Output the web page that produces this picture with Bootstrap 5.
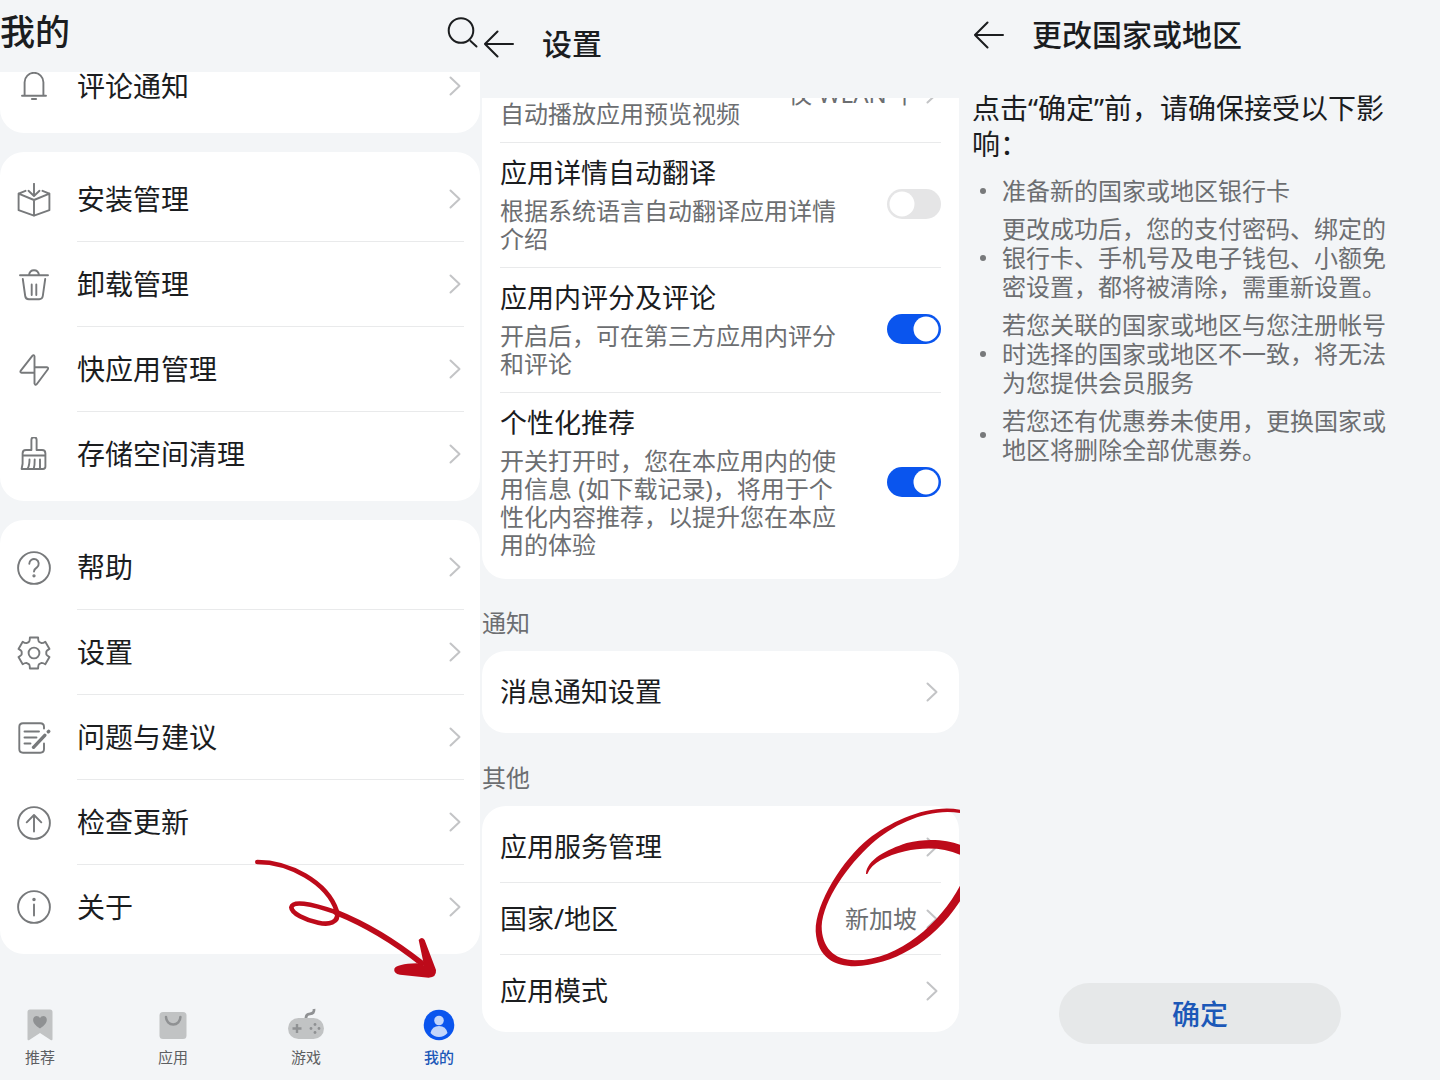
<!DOCTYPE html>
<html lang="zh-CN">
<head>
<meta charset="utf-8">
<meta name="viewport" content="width=device-width, initial-scale=1">
<title>应用市场设置</title>
<link href="https://cdn.jsdelivr.net/npm/bootstrap@5.3.0/dist/css/bootstrap.min.css" rel="stylesheet">
<style>
  :root { --ink: #1b1d1f; --soft: #6c6e71; --page: #f3f5f7; --rule: #e9eaeb; --blue: #0a55ee; --red: #bd0a1a; }
  body { background: var(--page); color: var(--ink); font-family: "Noto Sans", "Noto Sans CJK SC", sans-serif; font-size: 28px; line-height: 36px; }
  a { color: inherit; text-decoration: none; }
  svg { display: block; flex: none; }
  .line-icon { fill: none; stroke: #77797b; stroke-width: 1.9; stroke-linecap: round; stroke-linejoin: round; }
  .panel { min-height: 100vh; }
  .viewport { overflow: hidden; }
  .icon-btn { border: 0; background: none; padding: 0; color: var(--ink); }
  .icon-btn svg { fill: none; stroke: currentColor; stroke-width: 2; stroke-linecap: round; }
  .sheet { background: #fff; border-radius: 24px; padding: 5px 0; }
  .chev { width: 12px; height: 20px; fill: none; stroke: #c3c4c6; stroke-width: 2; stroke-linecap: round; stroke-linejoin: round; }
  .soft { color: var(--soft); font-size: 24px; line-height: 28px; }
  .bar-title { font-size: 30px; font-weight: 500; margin: 0; }

  /* first screen */
  .mine-head { height: 72px; padding: 0 2px 8px 0; }
  .mine-head h1 { font-size: 35px; font-weight: 500; margin: 0; }
  .mine-list { margin-top: -33px; gap: 19px; }
  .mine-row { height: 85px; padding: 0 16px 0 17px; gap: 26px; }
  .mine-row:last-child { height: 84px; }
  .mine-body { height: 100%; padding-right: 3px; border-bottom: 1px solid var(--rule); }
  .mine-row:last-child .mine-body { border-bottom: 0; }
  .tabs { padding: 0 19px 13px 18px; font-size: 15px; line-height: 20px; color: #5d5f62; }
  .tabs a { width: 44px; gap: 4px; }
  .tabs a.current { color: #1c58b8; font-weight: 500; }
  .scribble-arrow { position: absolute; right: 0; bottom: 0; pointer-events: none; }

  /* second screen */
  .prefs { padding-left: 2px; font-size: 27px; }
  .prefs .viewport { padding-right: 1px; }
  .prefs-head { height: 98px; padding: 0 2px 10px; gap: 28px; }
  .prefs-list { margin-top: -57px; }
  .prefs .sheet > * { margin: 0 18px; border-bottom: 1px solid var(--rule); }
  .prefs .sheet > :last-child { border-bottom: 0; }
  .pref-row { padding: 12px 0 14px; gap: 40px; }
  .pref-row:last-child { padding-bottom: 15px; }
  .pref-row .soft { margin-top: 6px; }
  .preview-row { min-height: 97px; gap: 9px; padding-right: 3px; }
  .preview-label { padding-bottom: 14px; }
  .link-row { min-height: 72px; padding-right: 3px; }
  .link-row .soft { margin-right: 9px; }
  .group-name { margin: 30px 0 14px; font-weight: 400; }
  .last-group { padding-top: 1px; }
  .form-switch .form-check-input { width: 54px; height: 30px; margin: 0; border: 0; background-color: #e5e5e6; background-size: 30px 30px;
    background-image: url("data:image/svg+xml,%3csvg xmlns='http://www.w3.org/2000/svg' viewBox='0 0 30 30'%3e%3ccircle cx='15' cy='15' r='12.5' fill='white'/%3e%3c/svg%3e"); }
  .form-switch .form-check-input:checked { background-color: var(--blue);
    background-image: url("data:image/svg+xml,%3csvg xmlns='http://www.w3.org/2000/svg' viewBox='0 0 30 30'%3e%3ccircle cx='15' cy='15' r='12.5' fill='white'/%3e%3c/svg%3e"); }
  .scribble-ring { position: absolute; right: -1px; top: -3px; pointer-events: none; }

  /* third screen */
  .region { padding: 0 44px 36px 12px; }
  .region-head { height: 70px; padding-left: 2px; gap: 28px; }
  .region-lead { margin: 20px 0 14px; }
  .effects { gap: 9px; margin: 0; padding-left: 8px; }
  .effects li { display: flex; align-items: center; gap: 16px; line-height: 29px; }
  .effects li::before { content: ""; flex: none; width: 6px; height: 6px; border-radius: 50%; background: #77797b; }
  .confirm { width: 282px; height: 61px; margin-left: 32px; font-size: 28px; font-weight: 500; border: 0; color: #1c58b8; background: #e6e8e9; }
</style>
<script src="https://cdn.jsdelivr.net/npm/bootstrap@5.3.0/dist/js/bootstrap.bundle.min.js"></script>
</head>
<body>
<main class="container-fluid p-0">
<div class="row g-0">

  <section class="col-4 panel d-flex flex-column position-relative">
    <header class="mine-head d-flex align-items-center justify-content-between">
      <h1>我的</h1>
      <button class="icon-btn" type="button" aria-label="搜索"><svg width="32" height="32" viewBox="0 0 32 32"><circle cx="15" cy="14.500" r="12.300"/><path d="M24.500 25l6 5.500"/></svg></button>
    </header>
    <div class="viewport flex-grow-1">
      <div class="mine-list d-flex flex-column">
        <nav class="sheet">
          <a href="#" class="mine-row d-flex align-items-center">
            <svg class="line-icon" width="34" height="34" viewBox="0 0 34 34"><path d="M5 26.700h24M7.600 26.500V13.200a9.400 9.400 0 0 1 18.800 0v13.300"/><path d="M15 30h4" stroke-width="2.200"/></svg>
            <span class="mine-body flex-grow-1 d-flex align-items-center justify-content-between">评论通知<svg class="chev" viewBox="0 0 12 20"><path d="M1.500 1.500L10.500 10l-9 8.500"/></svg></span></a>
        </nav>
        <nav class="sheet">
          <a href="#" class="mine-row d-flex align-items-center">
            <svg class="line-icon" width="34" height="34" viewBox="0 0 34 34"><path d="M8.500 7.800L1.600 10.600v16.600L17 32.700l15.400-5.500V10.600l-6.900-2.800M1.600 10.600L17 17l15.400-6.400M17 17v15.700M17 .8v12M11.500 7.800L17 13l5.500-5.200"/></svg>
            <span class="mine-body flex-grow-1 d-flex align-items-center justify-content-between">安装管理<svg class="chev" viewBox="0 0 12 20"><path d="M1.500 1.500L10.500 10l-9 8.500"/></svg></span></a>
          <a href="#" class="mine-row d-flex align-items-center">
            <svg class="line-icon" width="34" height="34" viewBox="0 0 34 34"><path d="M3 7.200h28M12 7C12.500 3.500 14.500 2.200 17 2.200S21.500 3.500 22 7M5.800 11l2.400 17q.4 3.200 3.600 3.200h10.400q3.200 0 3.600-3.200l2.400-17M14.700 16.500V27M19.300 16.500V27"/></svg>
            <span class="mine-body flex-grow-1 d-flex align-items-center justify-content-between">卸载管理<svg class="chev" viewBox="0 0 12 20"><path d="M1.500 1.500L10.500 10l-9 8.500"/></svg></span></a>
          <a href="#" class="mine-row d-flex align-items-center">
            <svg class="line-icon" width="34" height="34" viewBox="0 0 34 34"><path d="M17.500 30.500V3.200q-.7-2-2.200-.4L3.600 17.800q-.8 1.700 1 1.900h12.900M17.500 14.300h12.400q1.800.3 1 1.900L19.700 31.200q-1.500 1.600-2.200-.7"/></svg>
            <span class="mine-body flex-grow-1 d-flex align-items-center justify-content-between">快应用管理<svg class="chev" viewBox="0 0 12 20"><path d="M1.500 1.500L10.500 10l-9 8.500"/></svg></span></a>
          <a href="#" class="mine-row d-flex align-items-center">
            <svg class="line-icon" width="34" height="34" viewBox="0 0 34 34"><path d="M14.400 13V2.800a2.600 2.600 0 0 1 5.200 0V13h5.400q3.400 0 3.400 3.400v2.100H5.600v-2.100q0-3.400 3.400-3.400zM5.600 18.500v8.300l-1 5.200h21.400q2.400 0 2.400-2.400V18.500M12.500 22.500q0 6-1.800 9M17.700 22.500q0 6-.9 9M23 22.500v9"/></svg>
            <span class="mine-body flex-grow-1 d-flex align-items-center justify-content-between">存储空间清理<svg class="chev" viewBox="0 0 12 20"><path d="M1.500 1.500L10.500 10l-9 8.500"/></svg></span></a>
        </nav>
        <nav class="sheet">
          <a href="#" class="mine-row d-flex align-items-center">
            <svg class="line-icon" width="34" height="34" viewBox="0 0 34 34"><circle cx="17" cy="17" r="15.900"/><path d="M12.300 12.800a4.700 4.700 0 1 1 7.600 3.600q-2.900 1.900-2.900 4.200"/><circle cx="17" cy="24.800" r=".7"/></svg>
            <span class="mine-body flex-grow-1 d-flex align-items-center justify-content-between">帮助<svg class="chev" viewBox="0 0 12 20"><path d="M1.500 1.500L10.500 10l-9 8.500"/></svg></span></a>
          <a href="#" class="mine-row d-flex align-items-center">
            <svg class="line-icon" width="34" height="34" viewBox="0 0 34 34"><path d="M12.900 1.500h8.200q.1 3 .6 3.900 1.500 1.200 3 1.750 1.600 0 3.600-1.450l4.200 7.200q-2.600 1.400-3.100 2.400-.3 1.700 0 3.400.5 1 3.100 2.400l-4.200 7.200q-2-1.400-3.600-1.450-1.500.5-3 1.750-.5.9-.6 3.900h-8.200q-.1-3-.6-3.900-1.500-1.200-3-1.750-1.600 0-3.600 1.450l-4.200-7.200q2.600-1.400 3.100-2.400.3-1.700 0-3.400-.5-1-3.100-2.400l4.200-7.200q2 1.400 3.600 1.450 1.500-.5 3-1.750.5-.9.6-3.900z"/><circle cx="17" cy="17" r="5.400"/></svg>
            <span class="mine-body flex-grow-1 d-flex align-items-center justify-content-between">设置<svg class="chev" viewBox="0 0 12 20"><path d="M1.500 1.500L10.500 10l-9 8.500"/></svg></span></a>
          <a href="#" class="mine-row d-flex align-items-center">
            <svg class="line-icon" width="34" height="34" viewBox="0 0 34 34"><path d="M27 7.500V6q0-3.700-3.700-3.700H6Q2.300 2.300 2.300 6v22q0 3.700 3.700 3.700h17.300q3.700 0 3.700-3.700v-5.500M7.500 10.500h14.500M7.500 16.500h12M7.500 22.500h6"/><path d="M16.500 26.300l11.300-12M31.300 10.800l.4-.4" stroke-width="3.400"/></svg>
            <span class="mine-body flex-grow-1 d-flex align-items-center justify-content-between">问题与建议<svg class="chev" viewBox="0 0 12 20"><path d="M1.500 1.500L10.500 10l-9 8.500"/></svg></span></a>
          <a href="#" class="mine-row d-flex align-items-center">
            <svg class="line-icon" width="34" height="34" viewBox="0 0 34 34"><circle cx="17" cy="17" r="15.900"/><path d="M17 25.500V9M9.700 16.300L17 9l7.300 7.300"/></svg>
            <span class="mine-body flex-grow-1 d-flex align-items-center justify-content-between">检查更新<svg class="chev" viewBox="0 0 12 20"><path d="M1.500 1.500L10.500 10l-9 8.500"/></svg></span></a>
          <a href="#" class="mine-row d-flex align-items-center">
            <svg class="line-icon" width="34" height="34" viewBox="0 0 34 34"><circle cx="17" cy="17" r="15.900"/><path d="M17 14.500v11"/><circle cx="17" cy="9.600" r=".8"/></svg>
            <span class="mine-body flex-grow-1 d-flex align-items-center justify-content-between">关于<svg class="chev" viewBox="0 0 12 20"><path d="M1.500 1.500L10.500 10l-9 8.500"/></svg></span></a>
        </nav>
      </div>
    </div>
    <nav class="tabs d-flex justify-content-between">
      <a href="#" class="d-flex flex-column align-items-center"><svg width="36" height="36" viewBox="0 0 36 36"><path d="M8 2.500h20q2.500 0 2.500 2.500v27q0 2-1.800 1L18 26 7.300 33q-1.800 1-1.800-1V5Q5.500 2.500 8 2.500z" fill="#c1c3c4"/><path d="M18 21.500C8 15.500 11 9 14.500 9q2.500 0 3.500 2 1-2 3.500-2C25 9 28 15.500 18 21.500z" fill="#8f9193"/></svg>推荐</a>
      <a href="#" class="d-flex flex-column align-items-center"><svg width="36" height="36" viewBox="0 0 36 36"><rect x="4.500" y="5" width="27" height="27" rx="3.500" fill="#c1c3c4"/><path d="M11 10a7.200 7.500 0 0 0 14.400 0" fill="none" stroke="#8f9193" stroke-width="2.500" stroke-linecap="round"/></svg>应用</a>
      <a href="#" class="d-flex flex-column align-items-center"><svg width="36" height="36" viewBox="0 0 36 36"><rect x="0" y="11" width="36" height="21" rx="10.500" fill="#c1c3c4"/><path d="M18 11q0-4 4-4.200 4.500-.2 4-4.800" fill="none" stroke="#8f9193" stroke-width="2.800"/><path d="M4.500 21.500h9M9 17v9" stroke="#8f9193" stroke-width="2.400"/><g fill="#8f9193"><circle cx="27" cy="17.500" r="1.400"/><circle cx="27" cy="25.500" r="1.400"/><circle cx="23" cy="21.500" r="1.400"/><circle cx="31" cy="21.500" r="1.400"/></g></svg>游戏</a>
      <a href="#" class="current d-flex flex-column align-items-center" aria-current="page"><svg width="36" height="36" viewBox="0 0 36 36"><circle cx="18" cy="18" r="15.300" fill="#0a55ee"/><circle cx="18" cy="13.500" r="4.800" fill="#c3d6fb"/><path d="M9.500 26q1.500-7 8.500-7t8.500 7q-3.500 4-8.500 4t-8.500-4z" fill="#c3d6fb"/></svg>我的</a>
    </nav>
    <svg class="scribble-arrow" width="240" height="240" viewBox="0 0 720 720" aria-hidden="true">
      <g fill="none" stroke="#bd0a1a" stroke-linecap="round" stroke-linejoin="round">
        <path d="M52 66C145 66 262 125 291 215C298 250 265 255 235 248C195 240 155 220 154 202C158 182 205 188 292 218" stroke-width="14"/>
        <path d="M288 217Q420 270 545 370" stroke-width="17"/>
      </g>
      <path d="M536 300Q546 288 554 300L588 390Q590 412 566 413L480 404Q460 400 463 386Q470 372 530 370L552 376Z" fill="#bd0a1a"/>
    </svg>
  </section>

  <section class="col-4 panel prefs d-flex flex-column">
    <header class="prefs-head d-flex align-items-center">
      <button class="icon-btn" type="button" aria-label="返回"><svg width="30" height="30" viewBox="0 0 30 30"><path d="M1 15h28M13.500 2.500L1 15l12.500 12.500"/></svg></button>
      <h2 class="bar-title">设置</h2>
    </header>
    <div class="viewport flex-grow-1">
      <div class="prefs-list">
        <div class="sheet">
          <a href="#" class="preview-row d-flex align-items-center">
            <span class="preview-label soft align-self-end flex-grow-1">自动播放应用预览视频</span>
            <span class="soft">仅 WLAN 下</span>
            <svg class="chev" viewBox="0 0 12 20"><path d="M1.500 1.500L10.500 10l-9 8.500"/></svg>
          </a>
          <div class="pref-row form-switch d-flex align-items-center">
            <label class="flex-grow-1" for="translate">应用详情自动翻译<span class="soft d-block">根据系统语言自动翻译应用详情介绍</span></label>
            <input class="form-check-input flex-shrink-0" type="checkbox" role="switch" id="translate">
          </div>
          <div class="pref-row form-switch d-flex align-items-center">
            <label class="flex-grow-1" for="rating">应用内评分及评论<span class="soft d-block">开启后，可在第三方应用内评分和评论</span></label>
            <input class="form-check-input flex-shrink-0" type="checkbox" role="switch" id="rating" checked>
          </div>
          <div class="pref-row form-switch d-flex align-items-center">
            <label class="flex-grow-1" for="personal">个性化推荐<span class="soft d-block">开关打开时，您在本应用内的使用信息 (如下载记录)，将用于个性化内容推荐，以提升您在本应用的体验</span></label>
            <input class="form-check-input flex-shrink-0" type="checkbox" role="switch" id="personal" checked>
          </div>
        </div>
        <h3 class="group-name soft">通知</h3>
        <div class="sheet">
          <a href="#" class="link-row d-flex align-items-center"><span class="flex-grow-1">消息通知设置</span><svg class="chev" viewBox="0 0 12 20"><path d="M1.500 1.500L10.500 10l-9 8.500"/></svg></a>
        </div>
        <h3 class="group-name last-group soft">其他</h3>
      </div>
      <div class="position-relative">
        <div class="sheet">
          <a href="#" class="link-row d-flex align-items-center"><span class="flex-grow-1">应用服务管理</span><svg class="chev" viewBox="0 0 12 20"><path d="M1.500 1.500L10.500 10l-9 8.500"/></svg></a>
          <a href="#" class="link-row d-flex align-items-center"><span class="flex-grow-1">国家/地区</span><span class="soft">新加坡</span><svg class="chev" viewBox="0 0 12 20"><path d="M1.500 1.500L10.500 10l-9 8.500"/></svg></a>
          <a href="#" class="link-row d-flex align-items-center"><span class="flex-grow-1">应用模式</span><svg class="chev" viewBox="0 0 12 20"><path d="M1.500 1.500L10.500 10l-9 8.500"/></svg></a>
        </div>
        <svg class="scribble-ring" width="150" height="170" viewBox="90 70 450 510" aria-hidden="true">
          <path d="M540 90C450 72 335 122 265 178C190 238 105 370 107 455C112 535 165 560 225 560C335 555 455 495 540 365V318C480 430 360 540 225 542C160 542 125 500 125 440C130 360 203 257 275 192C345 130 450 84 540 100Z" fill="#bd0a1a"/>
          <path d="M258 283C260 240 320 210 380 190C440 175 500 180 540 195V225C490 203 430 202 375 215C320 228 275 250 262 283Z" fill="#bd0a1a"/>
        </svg>
      </div>
    </div>
  </section>

  <section class="col-4 panel region d-flex flex-column">
    <header class="region-head d-flex align-items-center">
      <button class="icon-btn" type="button" aria-label="返回"><svg width="30" height="30" viewBox="0 0 30 30"><path d="M1 15h28M13.500 2.500L1 15l12.500 12.500"/></svg></button>
      <h2 class="bar-title">更改国家或地区</h2>
    </header>
    <p class="region-lead">点击“确定”前，请确保接受以下影响：</p>
    <ul class="effects soft list-unstyled d-flex flex-column">
      <li>准备新的国家或地区银行卡</li>
      <li>更改成功后，您的支付密码、绑定的银行卡、手机号及电子钱包、小额免密设置，都将被清除，需重新设置。</li>
      <li>若您关联的国家或地区与您注册帐号时选择的国家或地区不一致，将无法为您提供会员服务</li>
      <li>若您还有优惠券未使用，更换国家或地区将删除全部优惠券。</li>
    </ul>
    <button class="confirm btn rounded-pill mt-auto align-self-center" type="button">确定</button>
  </section>

</div>
</main>
</body>
</html>
